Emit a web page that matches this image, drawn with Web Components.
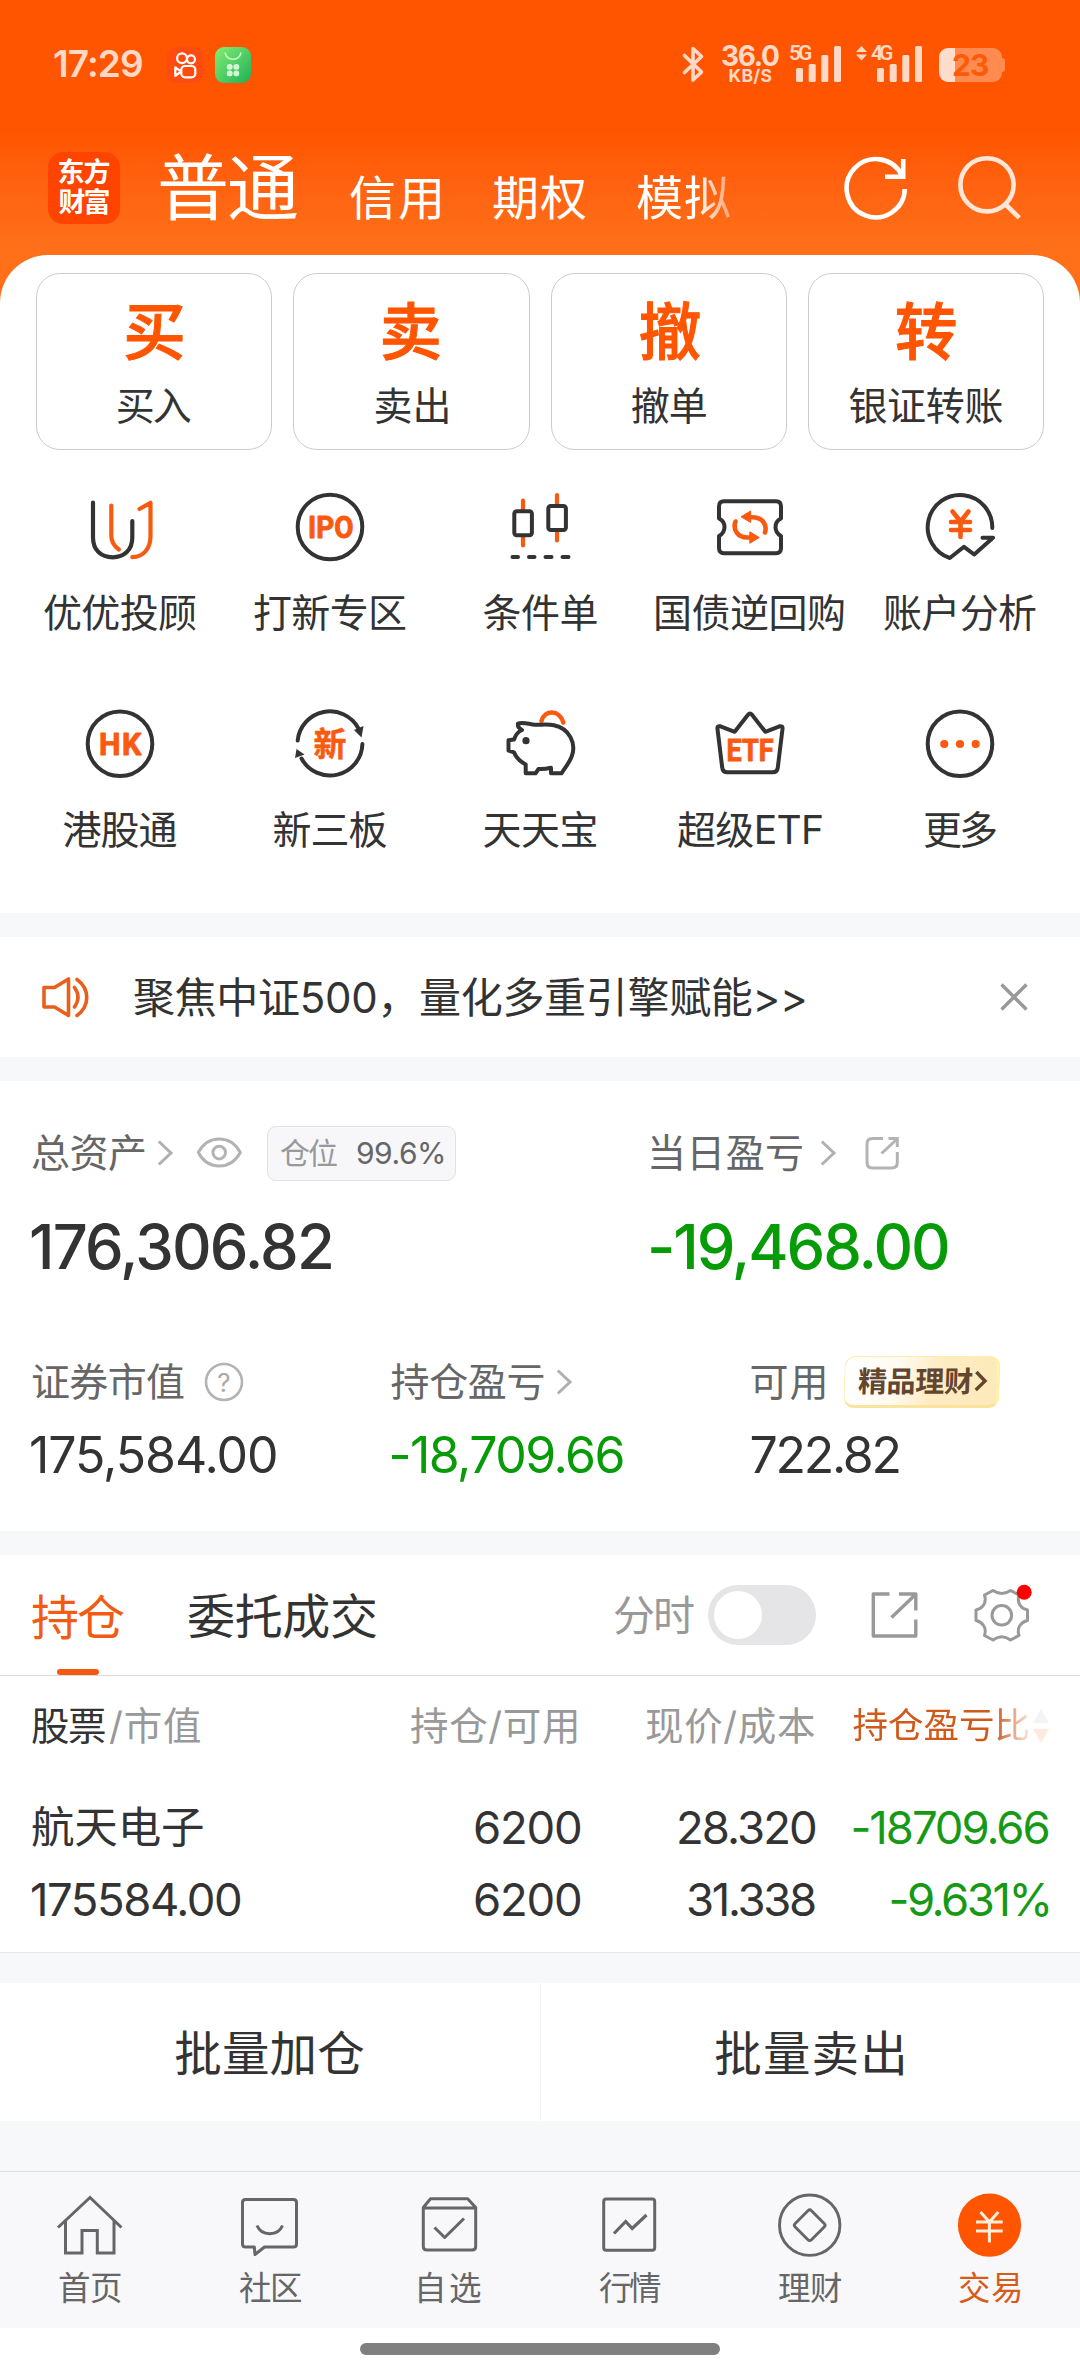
<!DOCTYPE html>
<html lang="zh-CN">
<head>
<meta charset="utf-8">
<title>交易</title>
<style>
html,body{margin:0;padding:0}
body{width:1080px;background:#fff;font-family:Inter,"Noto Sans CJK SC",sans-serif;color:#333;overflow-x:hidden}
</style>
</head>
<body>
<trade-app></trade-app>
<script>
// Icons keep the coordinates of the 1080px design grid; each entry is [viewBox, markup].
const D='#333',O='#fa5a10',G='#666';
const ICONS={
kwai:['167 47 36 36',`<rect x="167" y="47" width="36" height="36" rx="9" fill="#ff4a10"/><g fill="none" stroke="#fff" stroke-width="2.2"><circle cx="182" cy="58.3" r="4.9"/><circle cx="191" cy="59.3" r="4"/><rect x="181.3" y="66" width="14" height="11.3" rx="3.8"/><path stroke-linejoin="round" d="M175.3 67.3L181 71.5L175.3 75.8Z"/></g>`],
bag:['215 47 36 36',`<defs><linearGradient id="g" x1="0" y1="0" x2="1" y2="1"><stop offset="0" stop-color="#84ee74"/><stop offset="1" stop-color="#1faf57"/></linearGradient></defs><rect x="215" y="47" width="36" height="36" rx="9" fill="url(#g)"/><path d="M225 52.5C226.5 61.5 239.5 61.5 241 52.5" fill="none" stroke="#c9f7c4" stroke-width="1.6"/><g fill="#d0f6d4"><rect x="226.8" y="64" width="5.8" height="5.8" rx="2.5"/><rect x="233.4" y="64" width="5.8" height="5.8" rx="2.5"/><rect x="226.8" y="70.5" width="5.8" height="5.8" rx="2.5"/><rect x="233.4" y="70.5" width="5.8" height="5.8" rx="2.5"/></g>`],
bt:['680 44 24 40',`<path d="M683.5 55.5L700.5 72L692 80V48.5L700.5 56.5L683.5 72.5" fill="none" stroke="#ffd9c6" stroke-width="3.6" stroke-linejoin="round" stroke-linecap="round"/>`],
bars:['796 46 45 36',`<g fill="#ffd9c6"><rect x="796" y="68" width="7" height="14" rx="1.5"/><rect x="808.7" y="64" width="7" height="18" rx="1.5"/><rect x="821.3" y="55" width="7" height="27" rx="1.5"/><rect x="834" y="46" width="7" height="36" rx="1.5"/></g>`],
updown:['856 46 11 15',`<path d="M856 52L861.5 46L867 52ZM856 54.5L861.5 60.5L867 54.5Z" fill="#ffd9c6"/>`],
refresh:['844 156 64 64',`<path d="M904.8 189A29.1 29.1 0 1 1 901.8 175.3M903.2 159V176.8H885" fill="none" stroke="#fff" stroke-width="4.6"/>`],
search:['956 154 66 66',`<g fill="none" stroke="#ffe6d8" stroke-width="4.6"><circle cx="987" cy="183.8" r="26.6"/><path d="M1005 203L1019.3 216.8"/></g>`],
uu:['85 492 70 70',`<g fill="none" stroke-width="4.2" stroke-linecap="round" stroke-linejoin="round"><path stroke="${D}" d="M93 502.5V537.5C93 550 101 557.3 112.6 557.3C124.200 557.3 132.3 550 132.3 537.5V521"/><path stroke="${O}" d="M111.3 505.5V536C111.3 542.5 114 546 118.800 549.5M132.300 557.2C144 557 150.5 548 150.5 536V502.700L139.500 509"/></g>`],
ipo:['295 492 70 70',`<circle cx="330" cy="527" r="32.3" fill="none" stroke="${D}" stroke-width="4"/><text class="m" x="308" y="538" textLength="45.500" lengthAdjust="spacingAndGlyphs" font-size="30.500" fill="${O}" stroke="${O}">IPO</text>`],
kline:['505 492 70 70',`<g fill="none" stroke-width="4.2" stroke-linecap="round"><path stroke="${O}" d="M523 500.500V545.500M557 495V540.500"/><g stroke="${D}" fill="#fff" stroke-width="4"><rect x="514.3" y="511.300" width="17.6" height="24" rx="2.500"/><rect x="548.3" y="506" width="17.6" height="24" rx="2.500"/></g><path stroke="${D}" stroke-width="4" d="M512.500 557H518M529 557H534.500M545.500 557H551.500M562.500 557H568.500"/></g>`],
ticket:['715 492 70 70',`<path fill="none" stroke="${D}" stroke-width="4" stroke-linejoin="round" d="M724 501.3H776Q781 501.3 781 506.5V518.5Q775.5 521 775.500 527.3Q775.500 533 781 536V548Q781 553.2 776 553.2H724Q719 553.2 719 548V536Q724.500 533 724.500 527Q724.500 521 719 518.5V506.5Q719 501.3 724 501.3Z"/><g fill="none" stroke="${O}" stroke-width="4.6" stroke-linecap="round"><path d="M765 532.500C767.500 524 762 517.3 752 517.3H749M735.500 521.500C732.500 530 738 537.5 747 537.500H751"/></g><path fill="${O}" stroke="${O}" stroke-linejoin="round" d="M741 516.800L750.700 511V522.500ZM759.300 537.500L749.800 531.800V543.300Z"/>`],
acct:['925 492 70 70',`<g fill="none" stroke-linecap="round" stroke-linejoin="round"><path stroke="${D}" stroke-width="4" d="M992.300 528A32.300 32.300 0 1 0 949.8 558L964 546.8L974.2 554.5L993 537.700H982.500"/><path stroke="${O}" stroke-width="4.600" d="M952.500 511.500L960.500 521.500L968.500 511.500M951 522H970M951 530H970M960.500 521.500V537"/></g>`],
hk:['85 709 70 70',`<circle cx="120" cy="743.7" r="32.3" fill="none" stroke="${D}" stroke-width="4"/><text class="m" x="99" y="755" textLength="42.500" lengthAdjust="spacing" font-size="30.500" fill="${O}" stroke="${O}">HK</text>`],
xin:['294 709 72 70',`<g fill="none" stroke="${D}" stroke-width="4" stroke-linecap="round"><path d="M297.700 740.500A32.400 32.400 0 0 1 358.500 728.500M362.400 744A32.400 32.400 0 0 1 301.500 758.500"/></g><path fill="${D}" d="M363.500 726L354 730L361.500 737.500ZM296.500 749L295 758L304.500 754.500Z"/><text x="330" y="755.500" text-anchor="middle" font-size="33" font-weight="700" fill="${O}" stroke="${O}" stroke-width=".5">新</text>`],
pig:['503 709 72 70',`<g fill="none" stroke-linecap="round" stroke-linejoin="round"><path stroke="${O}" stroke-width="4.600" d="M540.500 721C543.500 709.500 558.500 709.500 562.300 722.500"/><path stroke="${D}" stroke-width="4" d="M517 723.500C522 721.500 528 724.300 534 724.800C540 725 546 723.800 553 725.300C568 728.500 576 743 570.500 757C568 763 564 768 560.500 773.300H550V767.700C545 769 541 769.300 537.500 769L534.500 773.300H524.700V764.500C519 761.500 515 757.500 513 752.300L507.500 750.500V740.300L513 739.500C514.500 735 517.500 731.500 521 730C518 728.500 516.500 726 517 723.500Z"/></g><circle cx="525" cy="740.700" r="3.600" fill="${D}"/>`],
etf:['713 709 74 70',`<path fill="none" stroke="${D}" stroke-width="4" stroke-linejoin="round" d="M748 714.800Q750 712 752 714.800L765.300 731.800L779.500 726.300Q783 725.500 782.500 729L777.800 767.500Q777.300 772.300 772.500 772.300H727.500Q722.700 772.300 722.200 767.500L717.500 729Q717 725.500 720.500 726.300L734.700 731.800Z"/><text class="m" x="726.500" y="761" textLength="47" lengthAdjust="spacingAndGlyphs" font-size="31" fill="${O}" stroke="${O}">ETF</text>`],
more:['925 709 70 70',`<circle cx="960" cy="743.7" r="32.3" fill="none" stroke="${D}" stroke-width="4"/><g fill="${O}"><circle cx="944.3" cy="744" r="4.100"/><circle cx="960" cy="744" r="4.100"/><circle cx="975.700" cy="744" r="4.100"/></g>`],
speaker:['41 975 49 44',`<path fill="none" stroke="#e8601c" stroke-width="3.600" stroke-linejoin="round" stroke-linecap="round" d="M44 987.500H54.500L68.500 979V1015.500L54.500 1007H44ZM74.500 987.500Q81.500 997 74.500 1007M77 979.500C90 989 90 1006 77 1015.500"/>`],
close:['999 982 30 30',`<path d="M1001.500 984.500L1026.500 1009.500M1026.500 984.500L1001.500 1009.500" stroke="#999" stroke-width="3.400" fill="none"/>`],
chev:['157 1139 17 28',`<path d="M158.800 1141.500L171 1153L158.800 1164.500" stroke="#b0b0b0" stroke-width="3" fill="none"/>`],
chevb:['973 1370 14 22',`<path d="M975 1372L984 1381L975 1390" stroke="#64462e" stroke-width="3.400" fill="none"/>`],
eye:['196 1135 47 33',`<g fill="none" stroke="#b3b3b3" stroke-width="3"><path stroke-linejoin="round" d="M198.300 1151.500C208 1133.500 230.500 1133.500 240.300 1151.500C230.500 1169.500 208 1169.500 198.300 1151.500Z"/><circle cx="219.200" cy="1151.600" r="6.300"/></g>`],
ext:['865 1136 35 34',`<path fill="none" stroke="#b3b3b3" stroke-width="3" d="M883 1138.500H872.500Q867 1138.500 867 1144V1162.500Q867 1168 872.500 1168H891.500Q897.300 1168 897.300 1162.500V1152M888.500 1138.500H897.300V1147M881.500 1153.500L896.500 1139.500"/>`],
help:['204 1362 40 40',`<circle cx="224" cy="1382" r="18" fill="none" stroke="#b3b3b3" stroke-width="2.600"/><text x="224" y="1391.500" text-anchor="middle" font-size="26" fill="#aaa">?</text>`],
ext2:['870 1591 48 48',`<path fill="none" stroke="#999" stroke-width="3.400" stroke-linejoin="round" d="M889.500 1594H873.300V1636H915.800V1619.500M899 1594H915.800V1610.500M891.500 1617.500L915 1595"/>`],
gear:['974 1584 58 58',`<g fill="none" stroke="#999" stroke-width="3" stroke-linejoin="round"><path d="M993 1590.500Q1001.800 1596.500 1010.500 1590.500L1019 1595C1016.500 1603 1021 1608.500 1027.500 1610V1620.500C1021 1622 1016.500 1627.500 1019 1635.500L1010.500 1640Q1001.800 1633.500 993 1640L984.500 1635.500C987 1627.500 982.500 1622 976 1620.500V1610C982.500 1608.500 987 1603 984.500 1595Z"/><circle cx="1001.800" cy="1615.300" r="9.800"/></g><circle cx="1024.200" cy="1592.300" r="7.500" fill="#f00"/>`],
sort:['1033 1710 16 34',`<path fill="#f4f4f4" d="M1033 1724L1041 1710L1049 1724Z"/><path fill="#fde9e0" d="M1033 1730H1049L1041 1744Z"/>`],
home:['56 2192 68 66',`<path fill="none" stroke="${G}" stroke-width="3" d="M58 2227.500L90 2197.500L121.500 2227.500M65.500 2221V2253H82V2230.500H97.300V2253H114V2221"/>`],
chat:['236 2192 68 66',`<path fill="none" stroke="${G}" stroke-width="3" stroke-linejoin="round" d="M245.500 2199.500H293.500Q296.500 2199.500 296.500 2202.500V2244Q296.500 2247 293.500 2247H264.500L255 2254.500L254.300 2247H245.500Q242.500 2247 242.500 2244V2202.500Q242.500 2199.500 245.500 2199.500ZM257 2225.500C261.500 2236.500 278 2236.500 282.500 2225.500"/>`],
box:['416 2192 68 66',`<path fill="none" stroke="${G}" stroke-width="3" stroke-linejoin="round" d="M423.300 2207.500L430.500 2198.700H467.700L475.700 2207.500V2246.500Q475.700 2250 472 2250H427Q423.300 2250 423.300 2246.500ZM423.300 2208H475.700M434.500 2227.500L444.700 2237.500L464 2218.500"/>`],
trend:['596 2192 68 66',`<rect x="603.700" y="2198.900" width="51" height="51.300" rx="2.500" fill="none" stroke="${G}" stroke-width="3"/><path fill="none" stroke="${G}" stroke-width="3.200" d="M614 2233.500L625.700 2221.500L632.200 2228.500L646.500 2215"/>`],
wealth:['776 2192 68 66',`<circle cx="809.7" cy="2225.200" r="30.200" fill="none" stroke="${G}" stroke-width="2.900"/><rect x="798.200" y="2213.700" width="23" height="23" rx="2.500" transform="rotate(45 809.7 2225.2)" fill="none" stroke="${G}" stroke-width="2.900"/>`],
yen:['956 2192 68 66',`<circle cx="989.500" cy="2225.200" r="31.600" fill="#ff5500"/><path fill="none" stroke="#ffeed8" stroke-width="3" d="M980.500 2212L989.400 2222L998.300 2212M976 2222H1002.700M976 2231H1002.700M989.400 2222V2242.500"/>`]
};

class GlyphIcon extends HTMLElement{
  connectedCallback(){
    if(this.shadowRoot)return;
    const [vb,m]=ICONS[this.getAttribute('name')],p=vb.split(' ');
    this.attachShadow({mode:'open'}).innerHTML=`<style>:host{display:block;flex:none;width:${p[2]}px;height:${p[3]}px}svg{display:block}text{font-family:Inter,"Noto Sans CJK SC",sans-serif}.m{font-family:Roboto,sans-serif;font-weight:700;stroke-width:.9px;stroke-linejoin:round}</style><svg width="${p[2]}" height="${p[3]}" viewBox="${vb}">${m}</svg>`;
  }
}

// Text whose visible glyphs span exactly `w` pixels; `s` is the font size.
class InkText extends HTMLElement{
  connectedCallback(){
    if(this.shadowRoot)return;
    const s=+this.getAttribute('s'),w=+this.getAttribute('w');
    this.attachShadow({mode:'open'}).innerHTML=`<style>:host{display:block;flex:none;white-space:nowrap;width:${w}px;font-size:${s}px;line-height:${s}px;height:${s}px}span{display:inline-block}</style><span><slot></slot></span>`;
    const cs=getComputedStyle(this),c=document.createElement('canvas').getContext('2d'),t=this.textContent.trim();
    c.font=`${cs.fontWeight} ${s}px ${cs.fontFamily}`;
    const m=c.measureText(t),ink=m.actualBoundingBoxLeft+m.actualBoundingBoxRight,n=[...t].length;
    const sp=this.shadowRoot.querySelector('span');
    if(n>1)sp.style.letterSpacing=((w-ink)/(n-1)).toFixed(3)+'px';
    sp.style.marginLeft=m.actualBoundingBoxLeft.toFixed(2)+'px';
  }
}

function component(tag,html){
  customElements.define(tag,class extends HTMLElement{
    connectedCallback(){
      if(this.shadowRoot)return;
      this.attachShadow({mode:'open'}).innerHTML=html.replace(/\{\{(\w+)\}\}/g,(_,k)=>this.getAttribute(k)||'');
    }
  });
}

component('status-bar',`<style>
:host{display:flex;align-items:center;height:128px;padding:0 75px 0 54px;color:#ffd9c6;font-weight:600}
.sp{flex:1}.net{display:flex;flex-direction:column;align-items:center;margin:0 11px 0 17px}
.sig{display:grid;height:36px}.sig>*{grid-area:1/1}
.rat{font-family:Roboto,Inter,sans-serif;font-weight:600;height:15px;line-height:15px}
.bat{display:flex;align-items:center;justify-content:center;width:63px;height:34px;border-radius:9px;background:linear-gradient(90deg,#ffdccb 16px,#ff8b50 16px);color:#ff5a0a;margin:2px 0 0 17px;font-weight:700}
.nub{width:3px;height:14px;border-radius:0 3px 3px 0;background:#ff8b50;margin-top:2px}
</style>
<ink-text w="88" s="37" style="margin:-1px 25px 0 0">17:29</ink-text>
<glyph-icon name="kwai" style="margin-top:2px"></glyph-icon><glyph-icon name="bag" style="margin:2px 0 0 12px"></glyph-icon>
<div class="sp"></div>
<glyph-icon name="bt"></glyph-icon>
<div class="net"><ink-text w="57" s="28" style="height:20px;line-height:20px;font-weight:700">36.0</ink-text><ink-text w="42" s="17.500" style="height:14px;line-height:14px;font-weight:700;margin-top:3px">KB/S</ink-text></div>
<div class="sig"><ink-text class="rat" w="22" s="21">5G</ink-text><glyph-icon name="bars" style="margin-left:6px"></glyph-icon></div>
<glyph-icon name="updown" style="margin:-21px 4px 0 15px"></glyph-icon>
<div class="sig"><ink-text class="rat" w="22" s="21">4G</ink-text><glyph-icon name="bars" style="margin-left:6px"></glyph-icon></div>
<div class="bat"><ink-text w="35" s="30">23</ink-text></div><div class="nub"></div>`);

component('nav-bar',`<style>
:host{display:flex;align-items:center;height:119px;padding:0 58px 0 48px;color:#fff}
.logo{display:flex;flex-direction:column;align-items:center;justify-content:center;gap:3px;width:72px;height:72px;border-radius:15px;background:#ff4400;margin-right:40px;font-weight:700;font-family:Inter,"Noto Sans CJK SC",sans-serif}
.s{margin-top:20px}.fade{-webkit-mask:linear-gradient(90deg,#000 60px,rgba(0,0,0,.4) 93px);mask:linear-gradient(90deg,#000 60px,rgba(0,0,0,.4) 93px)}
</style>
<div class="logo"><ink-text w="51" s="27">东方</ink-text><ink-text w="51" s="27">财富</ink-text></div>
<ink-text w="137" s="72" style="margin-top:1px">普通</ink-text>
<ink-text class="s" w="90" s="47" style="margin-left:53px">信用</ink-text>
<ink-text class="s" w="93" s="47" style="margin-left:53px">期权</ink-text>
<ink-text class="s fade" w="93" s="47" style="margin-left:51px">模拟</ink-text>
<glyph-icon name="refresh" style="margin-left:auto"></glyph-icon>
<glyph-icon name="search" style="margin-left:48px"></glyph-icon>`);

component('action-card',`<style>
:host{display:flex;flex-direction:column;align-items:center;box-sizing:border-box;flex:1;height:177px;border:1.500px solid #ccc;border-radius:24px;padding-top:27px}
.big{color:#ff5500;font-weight:500;-webkit-text-stroke:1px #ff5500}
</style><ink-text class="big" w="58" s="62.500">{{glyph}}</ink-text><ink-text w="{{w}}" s="39" style="margin-top:22px">{{label}}</ink-text>`);

component('grid-item',`<style>:host{display:flex;flex-direction:column;align-items:center;width:210px;height:217px}</style>
<glyph-icon name="{{icon}}"></glyph-icon><ink-text w="{{w}}" s="39" style="margin-top:31px">{{label}}</ink-text>`);

component('notice-bar',`<style>:host{display:flex;align-items:center;height:120px;padding:0 51px 0 41px}</style>
<glyph-icon name="speaker"></glyph-icon><ink-text w="671" s="42" style="margin:2px auto 0 44px">聚焦中证500，量化多重引擎赋能&gt;&gt;</ink-text><glyph-icon name="close"></glyph-icon>`);

component('asset-panel',`<style>
:host{display:block;height:450px;color:#666;box-sizing:border-box;padding:45px 0 0 32px}
.r{display:flex;align-items:center}.h{height:54px}.c1{width:619px}.a{width:359.500px}.b{width:360px}
.r>div{display:flex;align-items:center}.k{color:#333}.g{color:#079b08}
.up{margin-top:-2px}
.tag{box-sizing:border-box;width:189px;height:55px;border:1px solid #e2e2e5;border-radius:9px;background:#f7f7fa;padding:0 11px 0 12px;margin-left:24px;display:flex;align-items:center;justify-content:space-between}
.badge{display:flex;align-items:center;gap:2px;box-sizing:border-box;width:156px;height:52px;padding-left:13px;margin-left:19px;border-radius:11px;transform:skewX(-2deg);background:linear-gradient(105deg,#fff 8%,#fffaf0 35%,#feecc2 58%,#fde9b8);border:1.500px solid #fbeeb0;border-bottom:3px solid #fae39c;border-right:3px solid #fdf3a6;color:#64462e;font-weight:700}
</style>
<div class="r h"><div class="c1"><ink-text class="up" w="113" s="39">总资产</ink-text><glyph-icon name="chev" style="margin-left:12px"></glyph-icon><glyph-icon class="up" name="eye" style="margin-left:22px"></glyph-icon><div class="tag"><ink-text w="57" s="30" style="color:#999">仓位</ink-text><ink-text w="87" s="30">99.6%</ink-text></div></div>
<div><ink-text class="up" w="151" s="39">当日盈亏</ink-text><glyph-icon name="chev" style="margin-left:18px"></glyph-icon><glyph-icon name="ext" style="margin-left:28px"></glyph-icon></div></div>
<div class="r" style="height:64px;margin-top:35px;font-weight:500"><div class="c1 k"><ink-text w="300" s="61.500" style="margin-left:-1px">176,306.82</ink-text></div><div class="g"><ink-text w="297" s="61.500">-19,468.00</ink-text></div></div>
<div class="r h" style="margin-top:76px;height:54px"><div class="a"><ink-text class="up" w="152" s="39">证券市值</ink-text><glyph-icon name="help" style="margin-left:20px"></glyph-icon></div>
<div class="b"><ink-text class="up" w="152" s="39">持仓盈亏</ink-text><glyph-icon name="chev" style="margin-left:12px"></glyph-icon></div>
<div><ink-text class="up" w="73" s="39">可用</ink-text><div class="badge"><ink-text w="114" s="29">精品理财</ink-text><glyph-icon name="chevb"></glyph-icon></div></div></div>
<div class="r" style="height:50px;margin-top:21px"><div class="a k"><ink-text w="245" s="50" style="margin-left:-1px">175,584.00</ink-text></div><div class="b g"><ink-text w="232" s="50">-18,709.66</ink-text></div><div class="k"><ink-text w="147" s="50">722.82</ink-text></div></div>`);

component('toggle-switch',`<style>:host{display:flex;align-items:center;box-sizing:border-box;width:108px;height:60px;border-radius:30px;background:#e5e5e7;padding:6px}i{width:48px;height:48px;border-radius:50%;background:#fff}</style><i></i>`);

component('holding-tabs',`<style>
:host{display:flex;align-items:center;box-sizing:border-box;height:121px;border-bottom:1.500px solid #ddd;padding:0 48px 0 32px}
.on{display:flex;flex-direction:column;align-items:center;justify-content:flex-end;height:120px;color:#f25b12}
.on i{width:42px;height:6px;border-radius:3px;background:#f5590f;margin-top:27px}
</style><div class="on"><ink-text w="92" s="48">持仓</ink-text><i></i></div>
<ink-text w="188" s="48" style="margin:3px 0 0 64px">委托成交</ink-text>
<ink-text w="80" s="42" style="margin:2px 14px 0 auto;color:#999">分时</ink-text>
<toggle-switch></toggle-switch><glyph-icon name="ext2" style="margin-left:54px"></glyph-icon><glyph-icon name="gear" style="margin:-5px 0 0 56px"></glyph-icon>`);

component('holding-table',`<style>
:host{display:block;box-sizing:border-box;height:277px;border-bottom:1.500px solid #e6e7ea;padding:14px 31.500px 0 32px}
.r{display:grid;grid-template-columns:1fr 240px 235px 233.500px;height:72px;align-items:center;justify-items:end}
.r>:first-child{justify-self:start}.h{color:#999;height:72px}.g{color:#169a16}
.f{display:flex;align-items:center}
.o{color:#cf5a1c;-webkit-mask:linear-gradient(90deg,#000 142px,rgba(0,0,0,.15) 176px);mask:linear-gradient(90deg,#000 142px,rgba(0,0,0,.15) 176px)}
</style>
<div class="r h"><div class="f"><ink-text w="73" s="38.500" style="color:#333">股票</ink-text><ink-text w="91" s="38.500" style="margin-left:4px">/市值</ink-text></div><ink-text w="166" s="38.500" style="margin-right:3px">持仓/可用</ink-text><ink-text w="169" s="38.500">现价/成本</ink-text><div class="f"><ink-text class="o" w="176" s="35.500">持仓盈亏比</ink-text><glyph-icon name="sort" style="margin-left:4px"></glyph-icon></div></div>
<div class="r" style="margin-top:30px"><ink-text w="171" s="43.500">航天电子</ink-text><ink-text w="105" s="45.500">6200</ink-text><ink-text w="136" s="45.500">28.320</ink-text><ink-text class="g" w="195" s="45.500">-18709.66</ink-text></div>
<div class="r"><ink-text w="208" s="45.500">175584.00</ink-text><ink-text w="105" s="45.500">6200</ink-text><ink-text w="127" s="45.500">31.338</ink-text><ink-text class="g" w="157" s="45.500">-9.631%</ink-text></div>`);

component('batch-bar',`<style>:host{display:flex;height:138px;background:#fff}div{flex:1;display:flex;align-items:center;justify-content:center;padding-top:4px}div+div{border-left:1px solid #f4f4f6}</style>
<div><ink-text w="189" s="47.500">批量加仓</ink-text></div><div><ink-text w="188" s="47.500" style="margin-right:2px">批量卖出</ink-text></div>`);

component('tab-item',`<style>:host{display:flex;flex-direction:column;align-items:center;width:180px;padding-top:20px;color:#666}:host([active]){color:#d65c1c}</style>
<glyph-icon name="{{icon}}"></glyph-icon><ink-text w="62" s="32.500" style="margin-top:15px">{{label}}</ink-text>`);

component('tab-bar',`<style>:host{display:flex;box-sizing:border-box;height:157px;background:#f8f8fa;border-top:1px solid #dedee0}</style><slot></slot>`);

component('home-indicator',`<style>:host{display:flex;justify-content:center;align-items:center;height:48px;background:#fff}i{width:360px;height:12px;border-radius:6px;background:#808080;margin-bottom:6px}</style><i></i>`);

component('trade-app',`<style>
:host{display:block;width:1080px;height:2376px;overflow:hidden;background:#fff}
header{height:303px;background:linear-gradient(#ff5500 130px,#ff6210 185px,#ff7019 250px)}
.panel{background:#fff;border-radius:48px 48px 0 0;margin-top:-48px;height:658px;box-sizing:border-box;padding-top:18px}
.cards{display:flex;gap:21px;padding:0 36px}
.grid{display:flex;flex-wrap:wrap;padding:42px 15px 0}
.gap{height:24px;background:#f7f8fa}
</style>
<header><status-bar></status-bar><nav-bar></nav-bar></header>
<div class="panel">
<div class="cards"><action-card glyph="买" label="买入" w="73"></action-card><action-card glyph="卖" label="卖出" w="72"></action-card><action-card glyph="撤" label="撤单" w="74"></action-card><action-card glyph="转" label="银证转账" w="153"></action-card></div>
<div class="grid">
<grid-item icon="uu" label="优优投顾" w="152"></grid-item><grid-item icon="ipo" label="打新专区" w="152"></grid-item><grid-item icon="kline" label="条件单" w="113"></grid-item><grid-item icon="ticket" label="国债逆回购" w="188"></grid-item><grid-item icon="acct" label="账户分析" w="152"></grid-item>
<grid-item icon="hk" label="港股通" w="113"></grid-item><grid-item icon="xin" label="新三板" w="113"></grid-item><grid-item icon="pig" label="天天宝" w="113"></grid-item><grid-item icon="etf" label="超级ETF" w="144"></grid-item><grid-item icon="more" label="更多" w="72"></grid-item>
</div></div>
<div class="gap"></div><notice-bar></notice-bar><div class="gap"></div>
<asset-panel></asset-panel><div class="gap"></div>
<holding-tabs></holding-tabs><holding-table></holding-table>
<div class="gap" style="height:30px"></div><batch-bar></batch-bar><div class="gap" style="height:50px"></div>
<tab-bar><tab-item icon="home" label="首页"></tab-item><tab-item icon="chat" label="社区"></tab-item><tab-item icon="box" label="自选"></tab-item><tab-item icon="trend" label="行情"></tab-item><tab-item icon="wealth" label="理财"></tab-item><tab-item icon="yen" label="交易" active></tab-item></tab-bar>
<home-indicator></home-indicator>`);

customElements.define('glyph-icon',GlyphIcon);
customElements.define('ink-text',InkText);
</script>
</body>
</html>
